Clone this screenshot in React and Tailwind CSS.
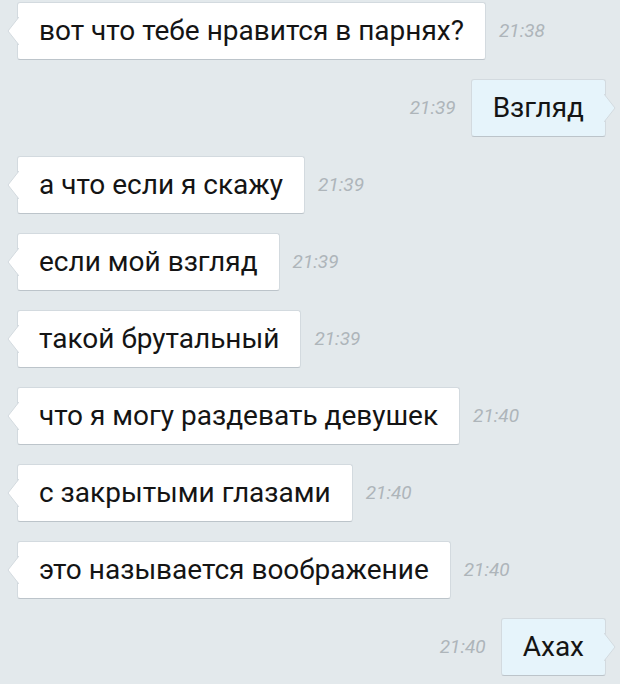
const messages = [
    { text: 'вот что тебе нравится в парнях?', time: '21:38', out: false },
    { text: 'Взгляд', time: '21:39', out: true },
    { text: 'а что если я скажу', time: '21:39', out: false },
    { text: 'если мой взгляд', time: '21:39', out: false },
    { text: 'такой брутальный', time: '21:39', out: false },
    { text: 'что я могу раздевать девушек', time: '21:40', out: false },
    { text: 'с закрытыми глазами', time: '21:40', out: false },
    { text: 'это называется воображение', time: '21:40', out: false },
    { text: 'Ахах', time: '21:40', out: true },
];

function Time({ value }) {
    return <span className="text-[19px] italic text-[#aeb5ba]">{value}</span>;
}

function Bubble({ text, out }) {
    return (
        <div
            className={`relative flex h-[58px] items-center rounded-[3px] border border-[#d3dadf] border-b-[#bcc4ca] px-[21px] text-[28px] text-[#141414] ${
                out ? 'bg-[#e6f4fb]' : 'bg-white'
            }`}
        >
            {out ? (
                <svg
                    className="absolute right-[-11px] top-[14px]"
                    width="12"
                    height="28"
                    viewBox="0 0 12 28"
                >
                    <path d="M0 0 L11 14 L0 28 Z" fill="#e6f4fb" />
                    <path d="M0 0 L11 14 L0 28" fill="none" stroke="#d3dadf" strokeWidth="1" />
                </svg>
            ) : (
                <svg
                    className="absolute left-[-11px] top-[14px]"
                    width="12"
                    height="28"
                    viewBox="0 0 12 28"
                >
                    <path d="M12 0 L1 14 L12 28 Z" fill="#ffffff" />
                    <path d="M12 0 L1 14 L12 28" fill="none" stroke="#d3dadf" strokeWidth="1" />
                </svg>
            )}
            {text}
        </div>
    );
}

export default function App() {
    return (
        <div
            className="flex h-[684px] w-[620px] flex-col gap-[19px] overflow-hidden bg-[#e3e9ec] pt-[2px]"
            style={{ fontFamily: 'Roboto, "Noto Sans", sans-serif' }}
        >
            {messages.map((m, i) =>
                m.out ? (
                    <div key={i} className="flex items-center justify-end gap-[15px] pr-[14px]">
                        <Time value={m.time} />
                        <Bubble text={m.text} out />
                    </div>
                ) : (
                    <div key={i} className="flex items-center gap-[13px] pl-[17px]">
                        <Bubble text={m.text} />
                        <Time value={m.time} />
                    </div>
                )
            )}
        </div>
    );
}
